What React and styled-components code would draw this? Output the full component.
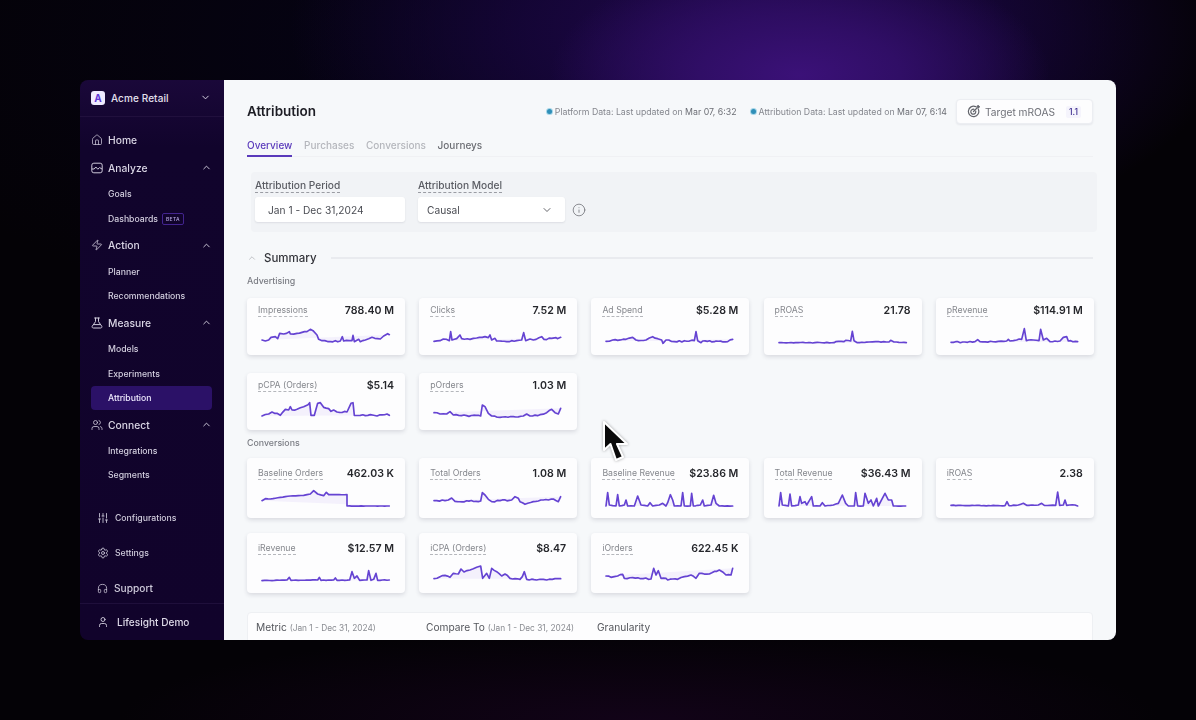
import React from 'react';
import styled, { createGlobalStyle } from 'styled-components';
import {
  House, Zap, Users, SlidersVertical, Settings, Headphones, User, Info, ChevronDown, ChevronUp,
} from 'lucide-react';

const Global = createGlobalStyle`
  html, body { margin: 0; padding: 0; background: #030206; }
  body { font-family: Inter, "Noto Sans", "Liberation Sans", sans-serif; }
  * { box-sizing: border-box; }
`;

const Stage = styled.div`
  position: relative;
  width: 1196px;
  height: 720px;
  padding: 80px;
  overflow: hidden;
  background:
    radial-gradient(ellipse 250px 120px at 800px 75px, #3b1178 0%, #300e66 40%, rgba(36, 10, 80, 0) 100%),
    radial-gradient(ellipse 470px 230px at 760px 30px, rgba(36, 9, 84, 0.95) 0%, rgba(24, 6, 62, 0.8) 50%, rgba(6, 2, 20, 0) 100%),
    radial-gradient(ellipse 520px 90px at 640px 720px, #120318 0%, rgba(14, 2, 18, 0) 100%),
    radial-gradient(ellipse 650px 300px at 500px 40px, rgba(6, 3, 24, 0.9) 0%, rgba(4, 2, 10, 0) 100%),
    #040206;
`;

const Window = styled.div`
  display: flex;
  width: 1036px;
  height: 560px;
  border-radius: 8px;
  overflow: hidden;
  filter: blur(0.4px);
`;

const Sidebar = styled.aside`
  flex: 0 0 144px;
  display: flex;
  flex-direction: column;
  color: #e4e0ee;
  background: linear-gradient(180deg, #1a0839 0%, #11042c 12%, #11032b 100%);
`;

const Brand = styled.div`
  flex: 0 0 37px;
  display: flex;
  align-items: center;
  padding: 0 13px 1px 11px;
  border-bottom: 1px solid #21103d;
`;

const Logo = styled.span`
  width: 14px;
  height: 14px;
  border-radius: 3px;
  background: #efeaff;
  color: #6136d6;
  font-size: 10px;
  font-weight: 700;
  display: flex;
  align-items: center;
  justify-content: center;
`;

const BrandName = styled.span`
  flex: 1;
  margin-left: 6px;
  font-size: 10px;
  font-weight: 500;
  letter-spacing: 0.1px;
`;

const Nav = styled.nav`
  display: flex;
  flex-direction: column;
  gap: 2.7px;
  padding: 11px 0 0;
`;

const Section = styled.div`
  display: flex;
  flex-direction: column;
`;

const NavRow = styled.div`
  height: 24px;
  flex: 0 0 24px;
  display: flex;
  align-items: center;
  gap: 5px;
  padding: 0 12px 0 11px;
  font-size: 10.3px;
  font-weight: 500;
  color: #d9d5e4;
`;

const HomeRow = styled(NavRow)`
  margin-bottom: 1.3px;
`;

const NavIcon = styled.span`
  width: 12px;
  height: 12px;
  display: flex;
  color: #cfcadb;
`;

const NavLabel = styled.span`
  flex: 1;
`;

const SubList = styled.div`
  display: flex;
  flex-direction: column;
  margin-top: 2px;
  padding: 0 12px 0 11px;
`;

const SubItem = styled.div`
  height: 24.4px;
  display: flex;
  align-items: center;
  gap: 4px;
  padding-left: 17px;
  border-radius: 4px;
  font-size: 8.7px;
  font-weight: 500;
  color: ${(p) => (p.$active ? '#efeaff' : '#d3cfdf')};
  background: ${(p) => (p.$active ? '#2b1167' : 'transparent')};
`;

const Beta = styled.span`
  font-size: 5px;
  font-weight: 500;
  letter-spacing: 0.3px;
  padding: 2px 3px;
  border-radius: 2px;
  color: #b4a7de;
  border: 1px solid #43248f;
`;

const Bottom = styled.div`
  margin-top: auto;
  display: flex;
  flex-direction: column;
`;

const UtilRow = styled.div`
  height: ${(p) => p.$h}px;
  display: flex;
  align-items: center;
  gap: 6px;
  padding: ${(p) => p.$pt || 0}px 0 0 17px;
  font-size: ${(p) => p.$size}px;
  font-weight: 500;
  color: #cfcbdb;
`;

const UserRow = styled.div`
  height: 37px;
  display: flex;
  align-items: center;
  gap: 8px;
  padding-left: 17px;
  font-size: 10.1px;
  font-weight: 500;
  color: #dedae8;
  border-top: 1px solid #1f0f3b;
`;

const Main = styled.main`
  flex: 1;
  min-width: 0;
  overflow: hidden;
  padding: 0 23px;
  background: #f6f8fa;
`;

const Header = styled.header`
  height: 60px;
  padding-top: 19px;
  display: flex;
  align-items: flex-start;
  justify-content: space-between;
`;

const Title = styled.h1`
  margin: 3px 0 0;
  font-size: 13.5px;
  line-height: 18px;
  font-weight: 600;
  color: #1d1d24;
`;

const HeaderRight = styled.div`
  display: flex;
  align-items: center;
  gap: 14px;
`;

const Status = styled.span`
  display: flex;
  align-items: center;
  gap: 3px;
  font-size: 8.75px;
  color: #85878e;
  b { font-weight: 400; color: #6c6e75; }
`;

const Dot = styled.i`
  width: 5px;
  height: 5px;
  border-radius: 50%;
  background: #2f8fb8;
  box-shadow: 0 0 0 1px #a7d6e8;
`;

const TargetButton = styled.div`
  width: 137px;
  height: 25px;
  margin-left: -5px;
  display: flex;
  align-items: center;
  padding-left: 10px;
  gap: 5px;
  background: #fdfdfe;
  border: 1px solid #eceef2;
  border-radius: 4px;
  box-shadow: 0 1px 2px rgba(30, 30, 60, 0.08);
  font-size: 10.2px;
  color: #6f7178;
`;

const TargetValue = styled.span`
  margin-left: 6px;
  padding: 1px 3px;
  border-radius: 2px;
  background: #f5f4fc;
  color: #3b2c8f;
  font-size: 8.5px;
  font-weight: 500;
`;

const Tabs = styled.div`
  display: flex;
  gap: 11.7px;
  height: 17px;
  border-bottom: 1px solid #f0f1f4;
`;

const Tab = styled.div`
  height: 17px;
  font-size: 10px;
  line-height: 11px;
  font-weight: 500;
  color: ${(p) => p.$color};
  border-bottom: ${(p) => (p.$active ? '2px solid #5a3abb' : 'none')};
`;

const FilterBar = styled.div`
  margin: 15px -4px 0 4px;
  height: 60px;
  display: flex;
  align-items: flex-start;
  gap: 13px;
  padding: 7px 4px 0;
  background: #f1f3f6;
  border-radius: 4px;
`;

const Field = styled.div`
  display: flex;
  flex-direction: column;
  gap: 4px;
`;

const FieldLabel = styled.span`
  align-self: flex-start;
  font-size: 10.2px;
  line-height: 13px;
  font-weight: 500;
  color: #5a5c63;
  border-bottom: 1px dashed #9a9ca3;
`;

const Input = styled.div`
  width: ${(p) => p.$w}px;
  height: 25px;
  display: flex;
  align-items: center;
  justify-content: space-between;
  padding: 0 12px 0 ${(p) => p.$pad}px;
  background: #fff;
  border-radius: 3px;
  box-shadow: 0 1px 2px rgba(40, 40, 70, 0.1);
  font-size: 10.2px;
  color: #4a4c53;
`;

const InfoWrap = styled.span`
  display: flex;
  margin: 24px 0 0 -6px;
  color: #6b6d73;
`;

const SummaryRow = styled.div`
  display: flex;
  align-items: center;
  gap: 7px;
  margin-top: 18px;
  height: 16px;
`;

const SummaryText = styled.span`
  font-size: 11.5px;
  font-weight: 500;
  color: #33343a;
`;

const Rule = styled.span`
  flex: 1;
  height: 1.5px;
  margin-left: 7px;
  background: #e9ebef;
`;

const GroupLabel = styled.div`
  font-size: 8.8px;
  line-height: 12px;
  font-weight: 500;
  color: #7a7c83;
  margin-top: ${(p) => p.$mt}px;
`;

const Grid = styled.div`
  display: grid;
  grid-template-columns: repeat(5, 158px);
  column-gap: 14.2px;
  row-gap: ${(p) => p.$gap}px;
  margin-top: ${(p) => p.$mt}px;
`;

const Card = styled.div`
  height: ${(p) => p.$h}px;
  padding: ${(p) => p.$pt}px 11px 0;
  background: #fdfdfe;
  border-radius: 4px;
  box-shadow: 0 2px 4px rgba(40, 40, 70, 0.14);
`;

const CardHead = styled.div`
  display: flex;
  align-items: center;
  justify-content: space-between;
  height: 13px;
`;

const CardLabel = styled.span`
  font-size: 8.7px;
  line-height: 11px;
  color: #85878d;
  border-bottom: 1px dashed #b5b7bc;
`;

const CardValue = styled.span`
  font-size: 10.6px;
  font-weight: 600;
  color: #26272c;
`;

const Spark = styled.svg`
  display: block;
  width: 127px;
  height: 24px;
  margin: ${(p) => p.$mt}px 0 0 4px;
  overflow: visible;
`;

const BottomPanel = styled.div`
  margin-top: 19px;
  height: 60px;
  display: grid;
  grid-template-columns: 170px 171px auto;
  justify-content: start;
  padding: 8px 8px 0;
  background: #fdfdfe;
  border: 1px solid #eef0f3;
  border-radius: 4px;
`;

const PanelItem = styled.span`
  font-size: 10.2px;
  line-height: 13px;
  color: #55575d;
  small { font-size: 8.3px; color: #8a8c92; }
`;

const CursorWrap = styled.svg`
  position: absolute;
  left: 601px;
  top: 419px;
  filter: drop-shadow(0 0 1.5px rgba(0, 0, 0, 0.35));
`;

const AnalyzeIcon = () => (
  <svg width="12" height="12" viewBox="0 0 12 12" fill="none" stroke="currentColor" strokeWidth="1" strokeLinejoin="round">
    <rect x="0.8" y="1.2" width="10.4" height="9.6" rx="2" />
    <path d="M1 7h2.2l1.6-2 2 2.2L8.6 5.6 11 7" />
  </svg>
);

const FlaskIcon = () => (
  <svg width="12" height="12" viewBox="0 0 12 12" fill="none" stroke="currentColor" strokeWidth="1" strokeLinejoin="round" strokeLinecap="round">
    <path d="M3.6 1h4.8M4.5 1v3.6L1.4 9a1.2 1.2 0 0 0 1 2h7.2a1.2 1.2 0 0 0 1-2L7.5 4.6V1M3 7.6h6" />
  </svg>
);

const TargetIcon = () => (
  <svg width="13" height="13" viewBox="0 0 13 13" fill="none" stroke="#63656c" strokeWidth="1.2" strokeLinecap="round" strokeLinejoin="round">
    <path d="M8.6 1.6A5.2 5.2 0 1 0 11.4 4.4" />
    <path d="M7 4.3A2.5 2.5 0 1 0 8.7 6" />
    <path d="M6.5 6.5 10 3M10 3V1.5L11.3 0.6V1.7H12.4L11.4 3Z" />
  </svg>
);

const sections = [
  { label: 'Analyze', icon: <AnalyzeIcon />, items: [{ t: 'Goals' }, { t: 'Dashboards', beta: true }] },
  { label: 'Action', icon: <Zap size={12} strokeWidth={1.6} />, items: [{ t: 'Planner' }, { t: 'Recommendations' }] },
  { label: 'Measure', icon: <FlaskIcon />, items: [{ t: 'Models' }, { t: 'Experiments' }, { t: 'Attribution', active: true }] },
  { label: 'Connect', icon: <Users size={12} strokeWidth={1.6} />, items: [{ t: 'Integrations' }, { t: 'Segments' }] },
];

const advertising = [
  { l: 'Impressions', v: '788.40 M', b: '65 102', p: '65,150 75,153 85,150 92,142 105,140 112,146 118,130 130,132 147,125 150,132 170,130 185,127 200,125 210,118 218,122 230,135 235,148 245,152 270,155 300,153 306,140 310,153 335,152 338,136 342,155 355,148 360,155 375,150 395,142 420,147 430,138 442,131 447,134' },
  { l: 'Clicks', v: '7.52 M', b: '582 102', p: '582,154 600,152 610,147 628,152 632,125 636,150 650,146 660,135 665,146 690,148 710,144 735,140 745,143 750,135 755,150 765,145 770,153 800,155 830,152 845,150 851,128 857,152 870,147 880,150 905,140 912,148 935,145 948,143 952,146 962,142' },
  { l: 'Ad Spend', v: '$5.28 M', b: '65 102', p: '65,154 85,150 100,151 125,148 145,142 155,150 185,150 205,140 220,146 232,150 236,160 245,150 270,155 330,152 335,125 340,152 350,158 355,153 390,155 395,153 430,155 445,148' },
  { l: 'pROAS', v: '21.78', b: '580 102', p: '580,158 745,158 750,155 775,155 780,151 795,153 800,124 805,152 815,158 850,156 870,155 910,156 915,151 925,156 962,158', a: 1 },
  { l: 'pRevenue', v: '$114.91 M', b: '1098 102', p: '1098,157 1140,156 1170,155 1178,149 1185,155 1240,154 1265,153 1270,148 1275,153 1295,150 1310,148 1318,116 1324,152 1345,150 1362,152 1367,118 1375,150 1385,145 1395,155 1425,153 1435,142 1445,140 1450,153 1478,155' },
  { l: 'pCPA (Orders)', v: '$5.14', b: '65 327', p: '65,378 85,372 95,366 110,370 120,376 135,358 145,360 150,350 155,360 170,358 190,350 203,344 208,338 212,376 222,376 232,340 240,338 250,352 265,356 272,364 280,360 290,366 320,366 332,340 338,338 342,376 360,376 390,374 410,378 440,372 447,376' },
  { l: 'pOrders', v: '1.03 M', b: '582 327', p: '582,368 600,372 620,372 630,365 640,375 680,377 722,378 727,345 735,350 745,370 755,378 780,382 820,380 850,378 860,372 870,378 900,374 920,368 935,358 945,368 955,372 962,355' },
];

const conversions = [
  { l: 'Baseline Orders', v: '462.03 K', b: '65 102', p: '65,152 75,146 90,147 120,142 150,138 190,136 210,132 220,122 232,132 250,137 258,127 265,134 320,134 320,168 447,168', a: 0.3 },
  { l: 'Total Orders', v: '1.08 M', b: '582 102', p: '582,152 615,152 625,150 635,144 645,154 722,153 727,128 735,135 745,148 755,155 780,152 815,150 825,140 835,145 840,155 855,163 880,155 910,150 925,150 940,147 955,155 962,140' },
  { l: 'Baseline Revenue', v: '$23.86 M', b: '65 102', p: '65,168 70,128 75,165 95,168 100,134 105,168 120,165 125,150 130,168 150,168 160,138 170,165 190,168 197,158 205,168 225,165 235,160 245,168 250,158 258,134 265,150 270,168 290,168 295,128 300,168 318,168 322,130 327,168 348,165 355,150 360,168 380,165 388,136 395,160 405,168 445,168', a: 0.5 },
  { l: 'Total Revenue', v: '$36.43 M', b: '582 102', p: '582,168 587,128 592,165 610,168 615,132 620,168 640,165 645,140 650,160 660,155 665,165 680,140 685,168 705,168 712,158 720,168 745,165 760,160 772,135 782,160 790,168 808,168 812,128 818,168 835,168 840,130 850,160 858,150 865,168 875,145 880,168 900,130 910,150 920,150 925,168 962,168', a: 0.5 },
  { l: 'iROAS', v: '2.38', b: '1098 102', p: '1098,166 1260,167 1266,155 1272,167 1300,165 1315,160 1325,166 1360,165 1370,160 1378,166 1412,166 1418,126 1424,166 1435,165 1440,150 1445,166 1470,165 1478,168', a: 0.8 },
  { l: 'iRevenue', v: '$12.57 M', b: '65 327', p: '65,392 140,390 147,382 152,391 232,390 237,382 242,391 280,390 285,384 290,391 328,390 335,365 342,385 350,378 358,391 380,390 385,362 392,391 400,388 407,370 412,391 447,390', a: 0.8 },
  { l: 'iCPA (Orders)', v: '$8.47', b: '582 327', p: '582,386 600,380 615,376 630,382 640,370 655,372 663,357 672,366 690,360 710,352 722,348 728,385 740,370 748,385 755,355 770,365 785,378 795,372 810,385 840,388 847,380 853,365 860,388 890,390 910,388 920,390 945,386 962,386' },
  { l: 'iOrders', v: '622.45 K', b: '65 327', p: '65,378 80,382 100,378 115,373 120,385 145,383 200,387 208,355 215,375 222,362 230,385 245,385 250,390 280,388 300,380 320,375 335,385 345,370 375,372 405,360 425,375 440,375 445,355' },
];

// Subdivides long segments and adds seeded jitter, so a line has the day-to-day noise of real data.
const roughen = (points, amp = 2) => {
  const pts = points.split(' ').map((s) => s.split(',').map(Number));
  const out = [];
  pts.forEach(([x, y], i) => {
    out.push(`${x},${y}`);
    const next = pts[i + 1];
    if (!next) return;
    const steps = Math.floor((next[0] - x) / 7);
    for (let k = 1; k < steps; k += 1) {
      const t = k / steps;
      const nx = x + (next[0] - x) * t;
      const noise = Math.sin(nx * 12.9898 + y * 78.233) * 43758.5453;
      const j = (noise - Math.floor(noise) - 0.5) * 2 * amp;
      out.push(`${nx.toFixed(1)},${(y + (next[1] - y) * t + j).toFixed(1)}`);
    }
  });
  return out.join(' ');
};

const Metric = ({ m, h, pt, sparkTop }) => {
  const line = roughen(m.p, m.a);
  return (
    <Card $h={h} $pt={pt}>
      <CardHead>
        <CardLabel>{m.l}</CardLabel>
        <CardValue>{m.v}</CardValue>
      </CardHead>
      <Spark $mt={sparkTop} viewBox={`${m.b} 381 72`}>
        <polygon points={m.p} fill="#7a55e0" opacity="0.07" />
        <polyline points={line} fill="none" stroke="#6543d2" strokeWidth="5" strokeLinejoin="round" strokeLinecap="round" />
      </Spark>
    </Card>
  );
};

export default function App() {
  return (
    <Stage>
      <Global />
      <Window>
        <Sidebar>
          <Brand>
            <Logo>A</Logo>
            <BrandName>Acme Retail</BrandName>
            <ChevronDown size={11} strokeWidth={2} />
          </Brand>
          <Nav>
            <HomeRow>
              <NavIcon><House size={12} strokeWidth={1.5} /></NavIcon>
              <NavLabel>Home</NavLabel>
            </HomeRow>
            {sections.map((s) => (
              <Section key={s.label}>
                <NavRow>
                  <NavIcon>{s.icon}</NavIcon>
                  <NavLabel>{s.label}</NavLabel>
                  <ChevronUp size={11} strokeWidth={2} />
                </NavRow>
                <SubList>
                  {s.items.map((i) => (
                    <SubItem key={i.t} $active={i.active}>
                      {i.t}
                      {i.beta && <Beta>BETA</Beta>}
                    </SubItem>
                  ))}
                </SubList>
              </Section>
            ))}
          </Nav>
          <Bottom>
            <UtilRow $h={34} $size={8.7}><SlidersVertical size={12} strokeWidth={1.7} />Configurations</UtilRow>
            <UtilRow $h={35} $size={8.7}><Settings size={12} strokeWidth={1.7} />Settings</UtilRow>
            <UtilRow $h={33} $pt={3} $size={10.2}><Headphones size={11} strokeWidth={1.7} />Support</UtilRow>
            <UserRow><User size={12} strokeWidth={1.7} />Lifesight Demo</UserRow>
          </Bottom>
        </Sidebar>
        <Main>
          <Header>
            <Title>Attribution</Title>
            <HeaderRight>
              <Status><Dot /><span>Platform Data: Last updated on <b>Mar 07, 6:32</b></span></Status>
              <Status><Dot /><span>Attribution Data: Last updated on <b>Mar 07, 6:14</b></span></Status>
              <TargetButton>
                <TargetIcon />
                Target mROAS
                <TargetValue>1.1</TargetValue>
              </TargetButton>
            </HeaderRight>
          </Header>
          <Tabs>
            <Tab $active $color="#5a3abb">Overview</Tab>
            <Tab $color="#b4b6bc">Purchases</Tab>
            <Tab $color="#b4b6bc">Conversions</Tab>
            <Tab $color="#6c6e74">Journeys</Tab>
          </Tabs>
          <FilterBar>
            <Field>
              <FieldLabel>Attribution Period</FieldLabel>
              <Input $w={150} $pad={13}>Jan 1 - Dec 31,2024</Input>
            </Field>
            <Field>
              <FieldLabel>Attribution Model</FieldLabel>
              <Input $w={147} $pad={9}>Causal<ChevronDown size={12} strokeWidth={1.7} /></Input>
            </Field>
            <InfoWrap><Info size={14} strokeWidth={1.3} /></InfoWrap>
          </FilterBar>
          <SummaryRow>
            <ChevronUp size={10} strokeWidth={1.4} color="#9a9ca2" />
            <SummaryText>Summary</SummaryText>
            <Rule />
          </SummaryRow>
          <GroupLabel $mt={9}>Advertising</GroupLabel>
          <Grid $gap={18} $mt={11}>
            {advertising.map((m) => <Metric key={m.l} m={m} h={57} pt={6} sparkTop={7} />)}
          </Grid>
          <GroupLabel $mt={7}>Conversions</GroupLabel>
          <Grid $gap={15} $mt={9}>
            {conversions.map((m) => <Metric key={m.l} m={m} h={60} pt={9} sparkTop={4} />)}
          </Grid>
          <BottomPanel>
            <PanelItem>Metric <small>(Jan 1 - Dec 31, 2024)</small></PanelItem>
            <PanelItem>Compare To <small>(Jan 1 - Dec 31, 2024)</small></PanelItem>
            <PanelItem>Granularity</PanelItem>
          </BottomPanel>
        </Main>
      </Window>
      <CursorWrap width="30" height="46" viewBox="-3 -3 30 46">
        <path d="M0 0 V28 L6.5 22 L12 38 L19 35 L13 22 H23 Z" fill="#0a0a0a" stroke="#fff" strokeWidth="2" strokeLinejoin="round" />
      </CursorWrap>
    </Stage>
  );
}
